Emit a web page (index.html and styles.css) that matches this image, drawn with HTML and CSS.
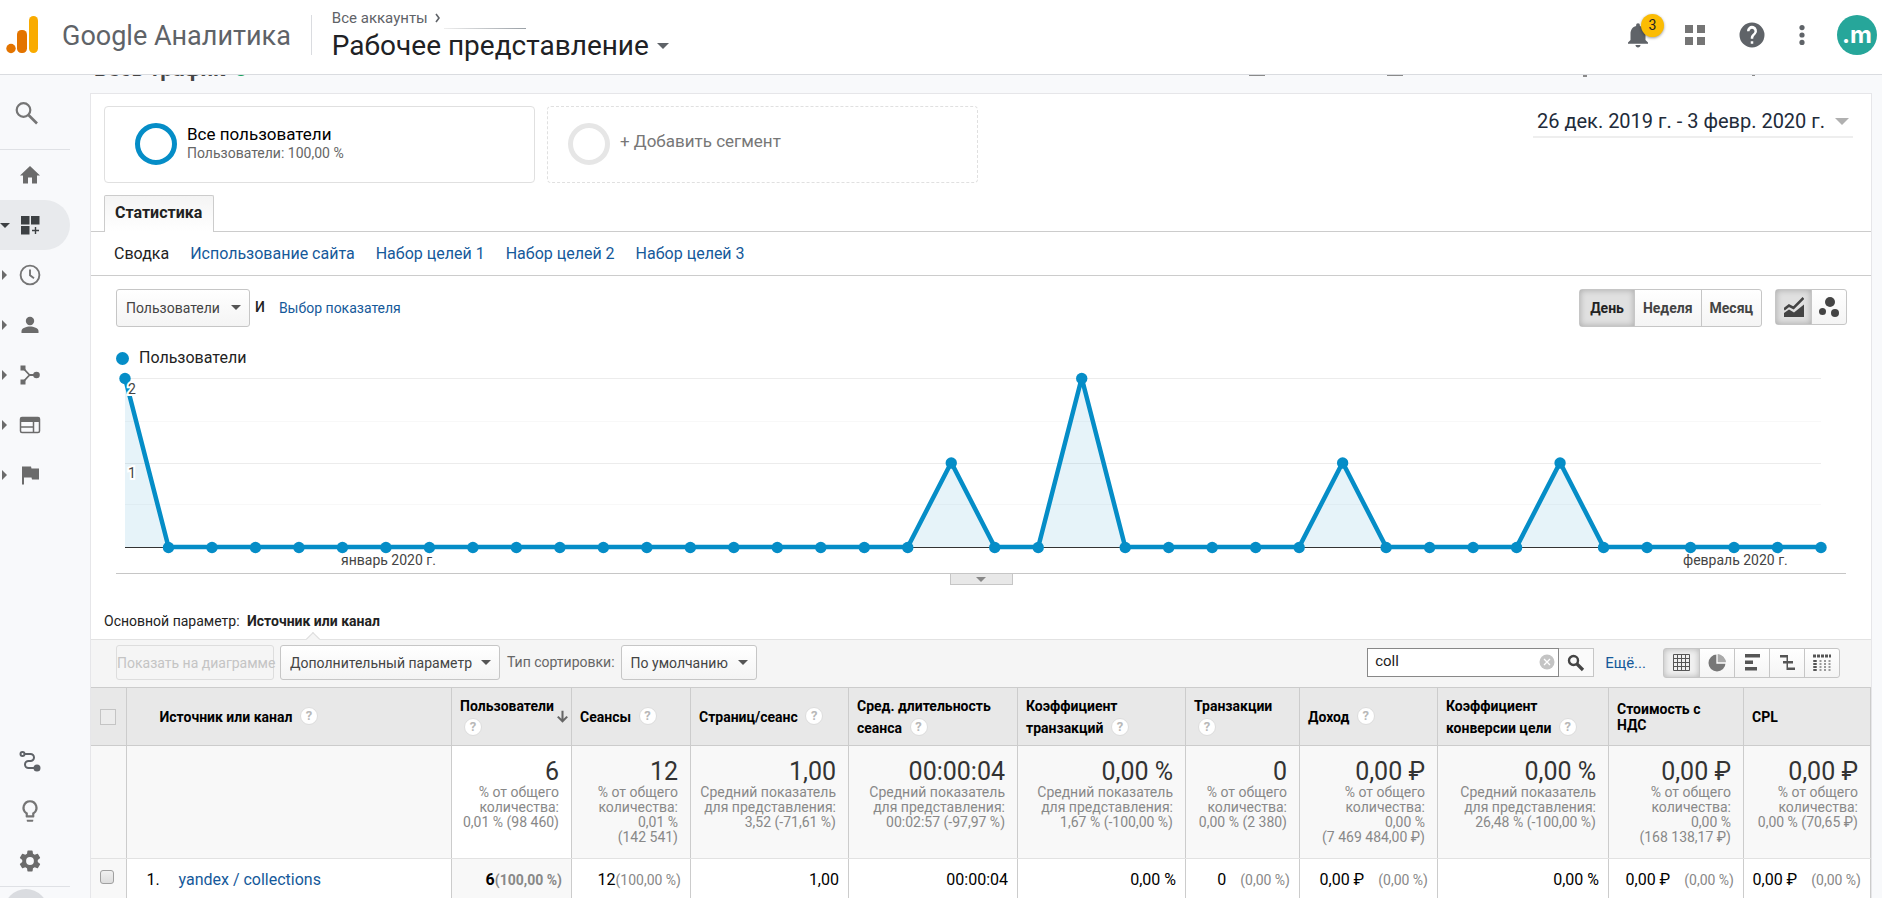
FILE: index.html
```html
<!DOCTYPE html>
<html lang="ru">
<head>
<meta charset="utf-8">
<title>Google Аналитика</title>
<link rel="stylesheet" href="styles.css">
</head>
<body>
<header class="topbar">
  <svg class="logo" width="34" height="38" viewBox="0 0 34 38"><rect x="23" y="0" width="9" height="37" rx="4.5" fill="#f9ab00"/><rect x="11" y="14" width="10" height="23" rx="4.5" fill="#e37400"/><circle cx="5" cy="32.500" r="4.700" fill="#e37400"/></svg>
  <span class="brand">Google Аналитика</span>
  <div class="account">
    <div class="crumb">Все аккаунты <svg class="chevron" width="7" height="10" viewBox="0 0 7 10"><path d="M1 1l3 4-3 4" fill="none" stroke="#5f6368" stroke-width="1.600"/></svg></div>
    <button class="view-name">Рабочее представление<i class="caret caret-big"></i></button>
    <span class="crumb-line"></span>
  </div>
  <nav class="top-actions">
    <button class="icon-btn bell" aria-label="Уведомления"><svg width="30" height="30" viewBox="0 0 24 24"><path fill="#5f6368" d="M12 22c1.100 0 2-.9 2-2h-4c0 1.100.9 2 2 2zm6-6v-5c0-3.100-1.600-5.600-4.500-6.300V4a1.500 1.500 0 0 0-3 0v.7C7.600 5.400 6 7.900 6 11v5l-2 2v1h16v-1l-2-2z"/></svg><span class="badge">3</span></button>
    <button class="icon-btn" aria-label="Приложения"><svg width="20" height="20" viewBox="0 0 20 20" fill="#757575"><path d="M0 0h8v8H0zM12 0h8v8h-8zM0 12h8v8H0zM12 12h8v8h-8z"/></svg></button>
    <button class="icon-btn" aria-label="Справка"><svg width="30" height="30" viewBox="0 0 24 24"><path fill="#5f6368" d="M12 2a10 10 0 1 0 0 20 10 10 0 0 0 0-20zm1 17h-2v-2h2v2zm2.070-7.750-.9.920C13.450 12.900 13 13.500 13 15h-2v-.5c0-1.100.45-2.100 1.170-2.830l1.240-1.260A2 2 0 1 0 10 9H8a4 4 0 1 1 7.070 2.250z"/></svg></button>
    <button class="icon-btn" aria-label="Ещё"><svg width="6" height="20" viewBox="0 0 6 20" fill="#5f6368"><circle cx="3" cy="2.600" r="2.600"/><circle cx="3" cy="10" r="2.600"/><circle cx="3" cy="17.400" r="2.600"/></svg></button>
    <button class="avatar">.m</button>
  </nav>
</header>

<div class="body">
  <aside class="sidebar">
    <a href="#" class="side-item search" aria-label="Поиск"><svg width="24" height="24" viewBox="0 0 24 24" fill="none" stroke="#757575" stroke-width="2.200"><circle cx="8.500" cy="9" r="6.800"/><path d="M13.500 14l8.500 8.500" stroke-width="2.600"/></svg></a>
    <div class="side-group">
      <a href="#" class="side-item" aria-label="Главная"><svg width="24" height="24" viewBox="0 0 24 24" fill="#6b6b6b"><path d="M10 20.500v-6h4v6h5v-8h3L12 3 2 12.500h3v8z"/></svg></a>
      <a href="#" class="side-item active" aria-label="Настройка"><i class="tri-down"></i><svg width="24" height="24" viewBox="0 0 24 24" fill="#3c4043"><path d="M3 3h8.500v8.500H3zM13 3h8.500v8.500H13zM3 13h8.500v8.500H3zM16.800 14h1.400v2.800h2.800v1.400h-2.800v2.800h-1.400v-2.800h-2.800v-1.400h2.800z"/></svg></a>
      <a href="#" class="side-item" aria-label="В реальном времени"><i class="tri"></i><svg width="24" height="24" viewBox="0 0 24 24" fill="none" stroke="#757575" stroke-width="1.900"><circle cx="12" cy="12" r="9.400"/><path d="M12 6.500V12.300l4 3"/></svg></a>
      <a href="#" class="side-item" aria-label="Аудитория"><i class="tri"></i><svg width="24" height="24" viewBox="0 0 24 24" fill="#6b6b6b"><circle cx="12" cy="8" r="4.200"/><path d="M3.500 20v-2c0-3 5-4.600 8.500-4.600s8.500 1.600 8.500 4.600v2z"/></svg></a>
      <a href="#" class="side-item" aria-label="Источники трафика"><i class="tri"></i><svg width="24" height="24" viewBox="0 0 24 24"><path d="M5 5l6.500 7L5 19M11 12h8" fill="none" stroke="#6b6b6b" stroke-width="1.800"/><path fill="#6b6b6b" d="M2.500 2.500h5v5h-5zM2.500 16.500h5v5h-5z"/><circle cx="18.500" cy="12" r="3.300" fill="#6b6b6b"/></svg></a>
      <a href="#" class="side-item" aria-label="Поведение"><i class="tri"></i><svg width="24" height="24" viewBox="0 0 24 24" fill="none" stroke="#6b6b6b" stroke-width="1.500"><rect x="2.500" y="4.500" width="19" height="15" rx="1.500"/><path d="M2 7h20" stroke-width="4"/><path d="M3 14h12M15.500 9v10"/></svg></a>
      <a href="#" class="side-item" aria-label="Конверсии"><i class="tri"></i><svg width="24" height="24" viewBox="0 0 24 24" fill="#6b6b6b"><path d="M4 3.500h9l.5 2H21v11h-7l-.5-2H6v7H4z"/></svg></a>
    </div>
    <div class="side-bottom">
      <a href="#" class="side-item" aria-label="Атрибуция"><svg width="24" height="24" viewBox="0 0 24 24" fill="none" stroke="#5f6368" stroke-width="2"><circle cx="4.500" cy="5" r="2"/><path d="M6.500 5h6a3.500 3.500 0 0 1 0 7h-2a3.500 3.500 0 0 0 0 7H17"/><circle cx="19" cy="19" r="2.500" fill="#5f6368"/></svg></a>
      <a href="#" class="side-item" aria-label="Рекомендации"><svg width="24" height="26" viewBox="1 0 22 24" fill="#757575"><path d="M9 21c0 .55.450 1 1 1h4c.55 0 1-.45 1-1v-1H9v1zm3-19a7 7 0 0 0-4 12.740V17c0 .55.450 1 1 1h6c.55 0 1-.45 1-1v-2.260A7 7 0 0 0 12 2zm2.850 11.100-.85.6V16h-4v-2.300l-.85-.6a5 5 0 1 1 5.700 0z"/></svg></a>
      <a href="#" class="side-item" aria-label="Администратор"><svg width="24" height="26" viewBox="1 0 22 24" fill="#6b6b6b"><path d="M19.140 12.940c.04-.3.060-.61.060-.94s-.02-.64-.07-.94l2.030-1.580a.49.49 0 0 0 .12-.61l-1.920-3.320a.49.49 0 0 0-.59-.22l-2.390.96c-.5-.38-1.030-.7-1.620-.94l-.36-2.540a.48.48 0 0 0-.48-.41h-3.840a.47.47 0 0 0-.47.41l-.36 2.540c-.59.240-1.130.57-1.620.94l-2.390-.96a.48.48 0 0 0-.59.220L2.740 8.870a.48.48 0 0 0 .12.610l2.030 1.580c-.05.3-.09.63-.09.94s.02.640.070.940l-2.030 1.580a.49.49 0 0 0-.12.610l1.920 3.320c.12.220.370.290.590.220l2.390-.96c.5.380 1.030.7 1.620.940l.36 2.540c.05.240.240.410.480.410h3.840c.24 0 .44-.17.470-.41l.36-2.540c.59-.24 1.130-.56 1.620-.94l2.390.96c.22.080.470 0 .59-.22l1.920-3.320a.48.48 0 0 0-.12-.61zM12 15.600a3.600 3.600 0 1 1 0-7.200 3.600 3.600 0 0 1 0 7.200z"/></svg></a>
      <div class="collapse"><span class="collapse-dot"></span></div>
    </div>
  </aside>

  <main class="main">
    <div class="page-head">
      <h1 class="page-title">Весь трафик <i class="verified"></i></h1>
      <svg class="page-tools" width="560" height="3" viewBox="0 0 560 3" fill="#8a8a8a"><path d="M0 0h16v1H0zM138 0h16v1h-16zM334 0h4v2h-4zM503 0h3v1h-3z"/></svg>
    </div>
    <section class="panel">
      <div class="segments">
        <button class="segment"><span class="ring"></span><span class="seg-text"><span class="seg-name">Все пользователи</span><span class="seg-sub">Пользователи: 100,00 %</span></span></button>
        <button class="segment add"><span class="ring"></span><span class="seg-add">+ Добавить сегмент</span></button>
        <button class="date-range"><span>26 дек. 2019 г. - 3 февр. 2020 г.</span><i class="caret caret-date"></i></button>
      </div>
      <div class="tabs"><a href="#" class="tab">Статистика</a></div>
      <nav class="subtabs">
        <a href="#" class="current">Сводка</a><a href="#">Использование сайта</a><a href="#">Набор целей 1</a><a href="#">Набор целей 2</a><a href="#">Набор целей 3</a>
      </nav>
      <div class="chart-controls">
        <span class="select-wrap"><select class="select metric" aria-label="Показатель"><option>Пользователи</option></select></span>
        <span class="and">И</span>
        <a href="#" class="pick">Выбор показателя</a>
        <div class="btn-group period"><button class="on">День</button><button>Неделя</button><button>Месяц</button></div>
        <div class="btn-group kinds">
          <button class="on" aria-label="График"><svg width="20" height="20" viewBox="0 0 20 20"><path fill="#444" d="M0 20v-4l5-3.500 5 3L20 7.500V20z"/><path d="M0 12.500L5 8.500l4.500 2.500L19.500 1" fill="none" stroke="#444" stroke-width="2.600"/></svg></button>
          <button aria-label="Диаграмма движения"><svg width="20" height="20" viewBox="0 0 20 20" fill="#444"><circle cx="11" cy="5" r="5"/><circle cx="3.500" cy="14.500" r="3.500"/><circle cx="16" cy="16" r="4"/></svg></button>
        </div>
      </div>
      <div class="legend"><span class="legend-dot"></span>Пользователи</div>
      <svg class="chart" viewBox="0 0 1780 204">
        <g stroke="#ececec"><path d="M34 9.500H1730M34 94.500H1730"/></g>
        <g stroke="#f8f8f8"><path d="M34 52.500H1730M34 135.500H1730"/></g>
        <path d="M34 178.500H1730" stroke="#333"/>
        <path id="area" fill="#058dc7" fill-opacity=".1"/>
        <path id="line" fill="none" stroke="#058dc7" stroke-width="4.500" stroke-linejoin="round"/>
        <g id="dots" fill="#058dc7"></g>
        <g class="axis-y"><text x="37" y="25">2</text><text x="37" y="109">1</text></g>
        <g class="axis-x"><text x="250" y="196">январь 2020 г.</text><text x="1592" y="196">февраль 2020 г.</text></g>
      </svg>
      <div class="chart-foot"><button class="handle" aria-label="Развернуть"><i class="caret caret-handle"></i></button></div>
      <div class="primary">Основной параметр: <b>Источник или канал<i class="notch"></i></b></div>
      <div class="toolbar">
        <button class="btn" disabled>Показать на диаграмме</button>
        <span class="select-wrap"><select class="select second" aria-label="Дополнительный параметр"><option>Дополнительный параметр</option></select></span>
        <label class="sort-label" for="sort">Тип сортировки:</label>
        <span class="select-wrap"><select class="select sort" id="sort"><option>По умолчанию</option></select></span>
        <div class="search-box">
          <input type="text" value="coll" aria-label="Поиск по таблице">
          <button class="clear" aria-label="Очистить"><svg width="16" height="16" viewBox="0 0 16 16"><circle cx="8" cy="8" r="7.500" fill="#c4c4c4"/><path d="M5 5l6 6M11 5l-6 6" stroke="#fff" stroke-width="1.300"/></svg></button>
          <button class="go" aria-label="Найти"><svg width="18" height="18" viewBox="0 0 18 18" fill="none" stroke="#444"><circle cx="6.500" cy="6.500" r="4.500" stroke-width="2.400"/><path d="M10 10l6 6" stroke-width="3.200"/></svg></button>
        </div>
        <a href="#" class="more">Ещё...</a>
        <div class="btn-group views">
          <button class="on" aria-label="Таблица"><svg width="17" height="17" viewBox="0 0 17 17" fill="none" stroke="#555"><path d="M.5.500h16v16H.500zM4.500 0v17M8.500 0v17M12.500 0v17M0 4.500h17M0 8.500h17M0 12.500h17"/></svg></button>
          <button aria-label="Доли"><svg width="18" height="18" viewBox="0 0 18 18"><circle cx="9" cy="9" r="8.500" fill="#777"/><path d="M9 9V0a9 9 0 0 1 9 9z" fill="#aaa"/><path d="M9 0v9h9" fill="none" stroke="#fff" stroke-width="1.300"/></svg></button>
          <button aria-label="Эффективность"><svg width="17" height="17" viewBox="0 0 17 17" fill="#555"><path d="M1 0h15v3.500H1zM1 6.500h8v3.500H1zM1 13h12v3.500H1z"/></svg></button>
          <button aria-label="Сравнение"><svg width="17" height="17" viewBox="0 0 17 17" fill="#555"><path d="M1 1h8v2.500H1zM4 7h5v2.500H4zM9 7h5v2.500H9zM8 13.500h8V16H8zM7.500 1H9v15H7.500z"/></svg></button>
          <button aria-label="Сводная"><svg width="19" height="17" viewBox="0 0 19 17" fill="none" stroke="#555"><path d="M0 2h18" stroke-width="3" stroke-dasharray="3 1"/><path d="M2 6v11" stroke-width="3.500" stroke-dasharray="2 1"/><path d="M7.500 6v11M12 6v11M16.500 6v11" stroke="#999" stroke-width="2" stroke-dasharray="2 1"/></svg></button>
        </div>
      </div>
      <table class="data">
        <colgroup><col class="c-check"><col><col class="c-users"><col class="c-sess"><col class="c-pages"><col class="c-dur"><col class="c-rate"><col class="c-trans"><col class="c-rev"><col class="c-goal"><col class="c-cost"><col class="c-cpl"></colgroup>
        <thead><tr>
          <th class="check"><input type="checkbox" class="box-all" aria-label="Выбрать все"></th>
          <th class="source">Источник или канал <span class="q">?</span></th>
          <th class="users"><span class="users-head"><span>Пользователи <span class="q">?</span></span><svg width="14" height="16" viewBox="0 0 14 16" fill="none" stroke="#666" stroke-width="2.600"><path d="M7 0v13M1 7.500L7 13.500 13 7.500"/></svg></span></th>
          <th>Сеансы <span class="q">?</span></th>
          <th>Страниц/сеанс <span class="q">?</span></th>
          <th>Сред. длительность сеанса <span class="q">?</span></th>
          <th>Коэффициент транзакций <span class="q">?</span></th>
          <th>Транзакции <span class="q">?</span></th>
          <th>Доход <span class="q">?</span></th>
          <th>Коэффициент конверсии цели <span class="q">?</span></th>
          <th class="plain">Стоимость с НДС</th>
          <th class="plain">CPL</th>
        </tr></thead>
        <tbody>
          <tr class="total">
            <td></td><td></td>
            <td class="users"><strong>6</strong>% от общего<br>количества:<br>0,01 % (98 460)</td>
            <td><strong>12</strong>% от общего<br>количества:<br>0,01 %<br>(142 541)</td>
            <td><strong>1,00</strong>Средний показатель<br>для представления:<br>3,52 (-71,61 %)</td>
            <td><strong>00:00:04</strong>Средний показатель<br>для представления:<br>00:02:57 (-97,97 %)</td>
            <td><strong>0,00 %</strong>Средний показатель<br>для представления:<br>1,67 % (-100,00 %)</td>
            <td><strong>0</strong>% от общего<br>количества:<br>0,00 % (2 380)</td>
            <td><strong>0,00 ₽</strong>% от общего<br>количества:<br>0,00 %<br>(7 469 484,00 ₽)</td>
            <td><strong>0,00 %</strong>Средний показатель<br>для представления:<br>26,48 % (-100,00 %)</td>
            <td><strong>0,00 ₽</strong>% от общего<br>количества:<br>0,00 %<br>(168 138,17 ₽)</td>
            <td><strong>0,00 ₽</strong>% от общего<br>количества:<br>0,00 % (70,65 ₽)</td>
          </tr>
          <tr class="item">
            <td class="check"><input type="checkbox" class="box" aria-label="yandex / collections"></td>
            <td class="source"><span class="num">1.</span><a href="#">yandex / collections</a></td>
            <td class="users">6<small>(100,00 %)</small></td>
            <td>12<small>(100,00 %)</small></td>
            <td>1,00</td><td>00:00:04</td><td>0,00 %</td>
            <td>0<small class="sp">(0,00 %)</small></td>
            <td>0,00 ₽<small class="sp">(0,00 %)</small></td>
            <td>0,00 %</td>
            <td>0,00 ₽<small class="sp">(0,00 %)</small></td>
            <td>0,00 ₽<small class="sp">(0,00 %)</small></td>
          </tr>
        </tbody>
      </table>
    </section>
  </main>
</div>
<script src="chart.js"></script>
</body>
</html>
```
FILE: chart.js
```js
// Daily users, 26 Dec 2019 - 3 Feb 2020
const users = new Array(40).fill(0);
users[0] = 2; users[19] = 1; users[22] = 2; users[28] = 1; users[33] = 1;
const points = users.map((v, i) => [34 + i * 1696 / 39, 178 - v * 84.5]);
const path = 'M' + points.map(p => p.join(' ')).join('L');
document.getElementById('line').setAttribute('d', path);
document.getElementById('area').setAttribute('d', path + 'V178H34Z');
const dots = document.getElementById('dots');
for (const [x, y] of points) {
  const c = document.createElementNS('http://www.w3.org/2000/svg', 'circle');
  c.setAttribute('cx', x);
  c.setAttribute('cy', y + 0.5);
  c.setAttribute('r', 5.7);
  dots.appendChild(c);
}
```
FILE: styles.css
```css
* { box-sizing: border-box; }
body { margin: 0; height: 100vh; display: flex; flex-direction: column; overflow: hidden; background: #f8f9fb; font: 14px/16px Roboto, sans-serif; color: #222; }
button, input, select { font: inherit; color: inherit; }
button { border: 0; background: none; padding: 0; }
a { color: #15599a; text-decoration: none; }

.topbar { flex: none; display: flex; align-items: center; height: 75px; border-bottom: 1px solid #dadce0; background: #fff; padding: 0 5px 4px 6px; }
.logo { flex: none; margin-right: 22px; }
.brand { font-size: 27px; line-height: 36px; color: #5f6368; margin-right: 20px; padding-top: 2px; }
.account { position: relative; border-left: 1px solid #dadce0; height: 40px; padding: 3px 0 0 20px; display: flex; flex-direction: column; justify-content: center; }
.crumb { font-size: 15px; line-height: 18px; color: #5f6368; }
.chevron { margin-left: 4px; }
.crumb-line { position: absolute; left: 132px; top: 13px; width: 82px; height: 1px; background: linear-gradient(90deg, #eee, #9aa0a6); }
.view-name { display: flex; align-items: center; gap: 8px; font-size: 28px; line-height: 38px; color: #202124; }
.caret { display: block; width: 0; height: 0; border: 6px solid transparent; border-bottom: 0; border-top: 6px solid #666; }
.caret-big { border-top-color: #5f6368; }
.caret-date { border-width: 7px 7px 0; border-top-color: #b0b0b0; }
.caret-handle { border-width: 5px 5px 0; border-top-color: #888; }
.top-actions { margin-left: auto; display: flex; align-items: center; }
.icon-btn { display: flex; margin-right: 32px; }
.bell { position: relative; }
.badge { position: absolute; left: 18px; top: -6px; width: 23px; height: 23px; border-radius: 12px; background: #fbbc04; color: #202124; font-size: 14px; line-height: 23px; text-align: center; box-shadow: 0 1px 3px rgba(0,0,0,.4); }
.avatar { width: 40px; height: 40px; border-radius: 20px; background: #26a69a; color: #fff; font: bold 24px/34px Inter, sans-serif; }

.body { flex: 1; display: flex; min-height: 0; }
.sidebar { flex: none; width: 90px; display: flex; flex-direction: column; }
.side-item { position: relative; display: flex; align-items: center; width: 70px; height: 50px; padding-left: 18px; }
.side-item.search { height: 75px; padding: 2px 0 0 15px; border-bottom: 1px solid #dfe1e5; }
.side-item.active { background: #e8eaed; border-radius: 0 25px 25px 0; }
.tri, .tri-down { position: absolute; top: 20px; left: 2px; border: 5px solid transparent; border-left-color: #6b6b6b; border-right: 0; }
.tri-down { left: 0; top: 23px; border: 5px solid transparent; border-top-color: #3c4043; border-bottom: 0; }
.side-bottom { margin-top: auto; }
.collapse { width: 70px; height: 12px; border-top: 1px solid #dfe1e5; overflow: hidden; padding: 2px 0 0 4px; }
.collapse-dot { display: block; width: 44px; height: 44px; border-radius: 22px; background: #dadce0; }

.main { flex: 1; min-width: 0; padding-right: 10px; }
.page-head { display: flex; align-items: flex-start; justify-content: space-between; height: 18px; overflow: hidden; }
.page-title { margin: -21px 0 0 4px; font-size: 22px; line-height: 30px; font-weight: 700; color: #444; display: flex; gap: 9px; align-items: center; }
.verified { width: 14px; height: 14px; border-radius: 7px; background: #0f9d58; }
.page-tools { margin-right: 63px; }
.panel { background: #fff; border: 1px solid #e6e6e9; border-bottom: 0; }
.segments { display: flex; align-items: flex-start; gap: 12px; padding: 12px 18px 12px 13px; }
.segment { display: flex; align-items: center; flex: 0 1 431px; height: 77px; border: 1px solid #e0e0e0; border-radius: 4px; padding: 0 0 2px 30px; gap: 10px; text-align: left; }
.segment.add { border-style: dashed; padding-left: 20px; }
.ring { width: 42px; height: 42px; border: 5px solid #058dc7; border-radius: 21px; }
.add .ring { border-color: #e6e6e6; }
.seg-text { display: flex; flex-direction: column; padding-bottom: 2px; }
.seg-name { font-size: 17px; line-height: 20px; color: #000; }
.seg-sub { line-height: 18px; color: #666; }
.seg-add { font-size: 17px; line-height: 24px; color: #777; padding-bottom: 6px; }
.date-range { display: flex; align-items: center; gap: 10px; margin-left: auto; height: 32px; padding: 0 4px; border-bottom: 2px solid #eee; font-size: 20px; color: #222b3a; }
.tabs { display: flex; height: 37px; padding-left: 13px; border-bottom: 1px solid #ccc; }
.tab { height: 37px; padding: 0 11px 0 10px; border: 1px solid #ccc; border-bottom: 0; background: linear-gradient(#f4f4f4, #fff); font-size: 16px; line-height: 34px; font-weight: 700; color: #222; border-radius: 2px 2px 0 0; }
.subtabs { display: flex; gap: 21px; height: 44px; padding-left: 23px; border-bottom: 1px solid #ccc; font-size: 16px; line-height: 44px; }
.subtabs .current { color: #222; }

.chart-controls { display: flex; align-items: center; padding: 13px 24px 0 25px; }
.select-wrap { position: relative; display: flex; }
.select-wrap::after { content: ""; position: absolute; right: 9px; top: 50%; margin-top: -3px; border: 5px solid transparent; border-top-color: #555; border-bottom: 0; pointer-events: none; }
.select { appearance: none; height: 38px; padding: 0 26px 0 9px; border: 1px solid #c6c6c6; border-radius: 3px; background: linear-gradient(#fff, #f4f4f4); color: #444; }
.select.metric { width: 134px; }
.select.second { width: 220px; height: 35px; }
.select.sort { width: 136px; height: 35px; }
.and { margin: 0 14px 3px 5px; color: #222; font-weight: 500; font-size: 14px; }
.btn-group { display: flex; border: 1px solid #c6c6c6; border-radius: 3px; background: linear-gradient(#fff, #f4f4f4); }
.btn-group button { display: flex; align-items: center; justify-content: center; color: #444; font-weight: 700; }
.btn-group button + button { border-left: 1px solid #c6c6c6; }
.btn-group .on { background: #e0e0e0; box-shadow: inset 0 0 6px rgba(0,0,0,.25); color: #222; }
.period { margin-left: auto; }
.period button { height: 36px; padding: 0 8px; }
.period .on { padding: 0 10px; }
.kinds { margin: 0 0 2px 13px; }
.kinds button { width: 35px; height: 34px; }
.legend { display: flex; align-items: center; gap: 10px; padding: 20px 0 0 25px; font-size: 16px; line-height: 22px; color: #222; }
.legend-dot { width: 13px; height: 13px; border-radius: 7px; background: #058dc7; }
.chart { display: block; width: 100%; }
.axis-y text { font: 14px Roboto, sans-serif; fill: #444; stroke: #fff; stroke-width: 4px; paint-order: stroke; }
.axis-x text { font: 14px Roboto, sans-serif; fill: #444; }
.chart-foot { display: flex; justify-content: center; height: 12px; margin: 0 25px; border-top: 1px solid #c6c6c6; }
.handle { display: flex; align-items: center; justify-content: center; width: 63px; height: 11px; border: 1px solid #c6c6c6; border-top: 0; background: #e8e8e8; }
.primary { padding: 27px 0 8px 13px; line-height: 19px; color: #222; }
.primary b { position: relative; margin-left: 4px; }
.notch { position: absolute; left: 50%; top: 21px; width: 10px; height: 10px; margin-left: -5px; border: 1px solid #ddd; border-width: 1px 0 0 1px; background: #f5f5f5; transform: rotate(45deg); }

.toolbar { display: flex; align-items: center; height: 48px; padding: 0 31px 2px 25px; border-top: 1px solid #e2e2e2; background: #f5f5f5; }
.btn { width: 158px; height: 35px; margin-right: 6px; border: 1px solid #ddd; border-radius: 3px; color: #c4c4c4; white-space: nowrap; }
.sort-label { margin: 0 6px 2px 7px; color: #666; }
.search-box { position: relative; display: flex; margin-left: auto; height: 29px; }
.search-box input { width: 192px; border: 1px solid #888; background: #fff; padding: 0 30px 4px 7px; font-size: 15px; color: #222; }
.clear { position: absolute; left: 172px; top: 6px; display: flex; }
.go { display: flex; align-items: center; justify-content: center; width: 35px; border: 1px solid #c6c6c6; border-left: 0; background: #fafafa; }
.more { margin: 0 17px 0 11px; font-size: 15px; }
.views button { width: 35px; height: 28px; }
.views .on { background: #f0f0f0; }

.data { width: 100%; table-layout: fixed; border-collapse: collapse; }
.c-check { width: 35px; } .c-users { width: 120px; } .c-sess { width: 119px; } .c-pages { width: 158px; } .c-dur { width: 169px; } .c-rate { width: 168px; } .c-trans { width: 114px; } .c-rev { width: 138px; } .c-goal { width: 171px; } .c-cost { width: 135px; } .c-cpl { width: 127px; }
.data th, .data td { border-right: 1px solid #ccc; }
.data th { height: 58px; padding: 0 6px 0 8px; border-top: 1px solid #ccc; border-bottom: 1px solid #ccc; background: #e8e8e8; text-align: left; line-height: 22px; font-weight: 700; color: #000; vertical-align: middle; }
.data th.source { padding-left: 33px; }
.data th.plain { padding-right: 32px; line-height: 16px; }
.data th.check, .data td.check { padding: 0 0 0 9px; text-align: left; }
.data th.users { padding-right: 3px; }
.users-head { display: flex; align-items: center; justify-content: space-between; }
.q { display: inline-block; width: 18px; height: 18px; margin: 0 4px; border: 1px solid #ddd; border-radius: 9px; background: #fff; color: #b8b8b8; line-height: 16px; text-align: center; font-size: 13px; vertical-align: 2px; }
.total td { height: 113px; padding: 12px 12px 0 0; background: #f8f8f8; border-bottom: 1px solid #e2e2e2; vertical-align: top; text-align: right; line-height: 15px; color: #888; white-space: nowrap; }
.total td.users { background: #fff; }
.total strong { display: block; font-size: 25px; line-height: 27px; font-weight: 400; color: #333; }
.item td { height: 40px; padding: 3px 9px 0 0; background: #fff; text-align: right; font-size: 16px; color: #000; white-space: nowrap; }
.item .users { background: #f8f8f8; font-weight: 700; }
.item td.check { background: #f8f8f8; }
.item td.source { text-align: left; }
.num { display: inline-block; width: 32px; margin-left: 20px; }
.item small { font-size: 14px; color: #888; }
.item .sp { margin-left: 14px; }
.box-all, .box { appearance: none; display: block; margin: 0; border: 1px solid #c4c4c4; width: 16px; height: 16px; background: #ececec; }
.box { width: 14px; height: 14px; border: 1px solid #a0a0a0; border-radius: 3px; background: linear-gradient(#f0f0f0, #ddd); margin-bottom: 4px; }
```
